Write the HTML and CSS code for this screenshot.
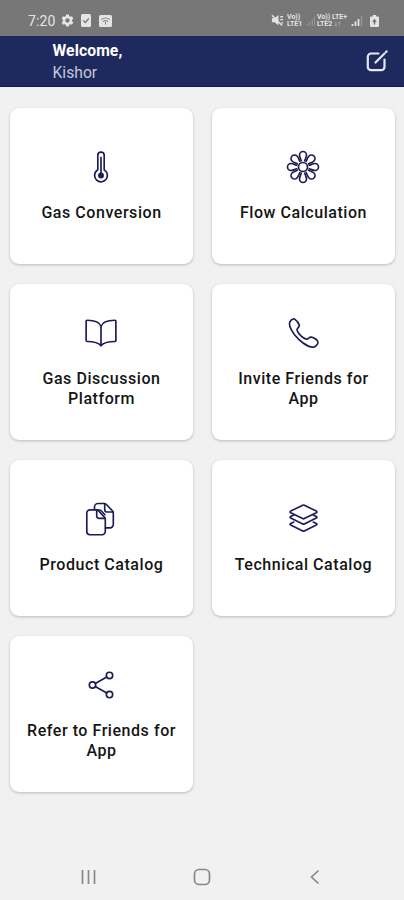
FILE: index.html
```html
<!DOCTYPE html>
<html lang="en">
<head>
<meta charset="utf-8">
<title>Home</title>
<link rel="stylesheet" href="styles.css">
</head>
<body>
<div class="status">
  <span class="time">7:20</span>
  <svg class="gear" width="13" height="13" viewBox="0 0 24 24"><path fill="currentColor" fill-rule="evenodd" d="M9.500 1h5l.7 3.200 2 1.100 3.100-1 2.500 4.300-2.400 2.200v2.400l2.400 2.200-2.500 4.300-3.100-1-2 1.100-.7 3.200h-5l-.7-3.200-2-1.100-3.100 1-2.500-4.300 2.400-2.200v-2.400L1.200 8.600l2.500-4.300 3.100 1 2-1.100zM12 8a4 4 0 100 8 4 4 0 000-8z"/></svg>
  <svg class="check" width="10" height="13" viewBox="0 0 10 13"><rect width="10" height="13" rx="1.500" fill="currentColor"/><path d="M2.300 6.500l2 2 3.500-4" fill="none" stroke="#777" stroke-width="1.300"/></svg>
  <svg class="cast" width="13" height="12" viewBox="0 0 13 12"><rect width="13" height="12" rx="1.500" fill="currentColor"/><path d="M2.300 4.500q4.200-3 8.400 0M4 6.500q2.500-1.800 5 0M6.500 7v2.500" fill="none" stroke="#8a8a8a" stroke-width="1.100"/></svg>
  <span class="spacer"></span>
  <svg class="mute" width="13" height="13" viewBox="0 0 14 13"><path fill="currentColor" d="M1 4h3l4-3.500v11L4 8.500H1z"/><path d="M1 .8l11 11M10 2.500h3M10 5.500h3M11 9h2" stroke="currentColor" stroke-width="1.500"/></svg>
  <span class="net">Vo))<br>LTE1</span>
  <svg class="dim" width="9" height="11" viewBox="0 0 10 11"><path d="M1 11V9M4 11V7M7 11V4M9.500 11V1" stroke="currentColor" stroke-width="1.300"/></svg>
  <span class="net wide">Vo)) LTE+<br>LTE2 &#8595;&#8593;</span>
  <svg class="bars" width="12" height="11" viewBox="0 0 12 11"><path d="M1.500 11V9M4.500 11V6.500M7.500 11V4" stroke="currentColor" stroke-width="1.800"/><path d="M10.500 11V.5" stroke="#999" stroke-width="1.300"/></svg>
  <svg class="battery" width="9" height="12" viewBox="0 0 9 12"><path fill="currentColor" fill-rule="evenodd" d="M2.800 0h3.400v1.500H8a1 1 0 011 1V11a1 1 0 01-1 1H1a1 1 0 01-1-1V2.500a1 1 0 011-1h1.800zM4.500 3.500L2.200 7h1.500v2.500h1.600V7h1.500z"/></svg>
</div>
<header class="header">
  <div class="greeting"><strong>Welcome,</strong><span>Kishor</span></div>
  <svg class="edit" width="24" height="24" viewBox="0 0 24 24"><path d="M13.500 4.500H6A3.200 3.200 0 002.800 7.700V18A3.200 3.200 0 006 21.200h10.300a3.200 3.200 0 003.200-3.200v-7.500"/><path d="M10.500 13.500l9-9M21 3l.6-.6"/></svg>
</header>
<main class="grid">
  <section class="card">
    <svg class="icon" viewBox="0 0 512 512"><path d="M307.720 302.270a8 8 0 01-3.720-6.750V80a48 48 0 00-48-48h0a48 48 0 00-48 48v215.520a8 8 0 01-3.710 6.740 97.510 97.510 0 00-44.190 86.070A96 96 0 00352 384a97.490 97.490 0 00-44.280-81.730zM256 112v272"/><circle class="fill" cx="256" cy="384" r="44"/></svg>
    <p>Gas Conversion</p>
  </section>
  <section class="card">
    <svg class="icon" viewBox="0 0 34 34">
      <defs><path id="petal" d="M15.300 10.800C14.600 8.800 13.500 7 13.500 5a3.500 3.500 0 017 0c0 2-1.100 3.800-1.800 5.800"/></defs>
      <g class="thin"><circle cx="17" cy="17" r="4.500"/>
      <use href="#petal"/><use href="#petal" transform="rotate(45 17 17)"/><use href="#petal" transform="rotate(90 17 17)"/><use href="#petal" transform="rotate(135 17 17)"/><use href="#petal" transform="rotate(180 17 17)"/><use href="#petal" transform="rotate(225 17 17)"/><use href="#petal" transform="rotate(270 17 17)"/><use href="#petal" transform="rotate(315 17 17)"/></g>
    </svg>
    <p>Flow Calculation</p>
  </section>
  <section class="card">
    <svg class="icon" viewBox="0 0 512 512"><path d="M256 160c16-63.160 76.430-95.410 208-96a15.940 15.940 0 0116 16v288a16 16 0 01-16 16c-128 0-177.450 25.810-208 64-30.370-38-80-64-208-64-9.880 0-16-8.050-16-17.930V80a15.940 15.940 0 0116-16c131.570.590 192 32.840 208 96zM256 160v288"/></svg>
    <p>Gas Discussion Platform</p>
  </section>
  <section class="card">
    <svg class="icon" viewBox="0 0 34 34"><path class="thin" d="M4 5.700C5.300 3.600 7.700 2.300 9 3.300c1.800 1.300 3.700 4 4.300 5.900.5 1.900-2.500 2.700-2.300 4.700.4 3.400 6.300 8.900 9.400 9.200 2 .2 2.900-2.400 4.800-2 2.300.5 5.600 2.500 6.500 4.300.9 1.700-.9 4.100-3 5.300-3.200 1.700-9.800-1.600-16-7.300C6.400 17.500 2 9.300 4 5.700z"/></svg>
    <p>Invite Friends for App</p>
  </section>
  <section class="card">
    <svg class="icon" viewBox="0 0 34 34"><g class="thin"><path d="M6 7.800h6.200c1 0 1.500.3 2.200 1l6 6.300c.7.700.9 1.200.9 2.200v12.200a3.200 3.200 0 01-3.200 3.200H6a3.200 3.200 0 01-3.200-3.200V11A3.200 3.200 0 016 7.800z"/><path d="M12.700 8.100v6a2.200 2.200 0 002.200 2.200h6"/><path d="M10.500 7.600V5A3.500 3.500 0 0114 1.500h6.200c1 0 1.500.3 2.200 1l6 6.200c.7.700.9 1.200.9 2.200v11.700a3.300 3.300 0 01-3.300 3.300h-4.500"/><path d="M20.700 1.800v6a2.200 2.200 0 002.200 2.200h6M13.500 8h1.700c1 0 1.500.3 2.200 1l3.500 3.700"/></g></svg>
    <p>Product Catalog</p>
  </section>
  <section class="card">
    <svg class="icon" viewBox="0.500 0 34 34"><g class="thin"><path d="M17.200 3.200q.8-.4 1.600 0l12 5.900q1.400.8 0 1.600l-12 5.900q-.8.400-1.600 0l-12-5.900q-1.400-.8 0-1.600z"/><path d="M8.200 13l-3 1.400q-1.400.8 0 1.600l12 5.900q.8.400 1.600 0l12-5.900q1.400-.8 0-1.600l-3-1.400"/><path d="M8.200 20.100l-3 1.400q-1.400.8 0 1.600l12 5.900q.8.400 1.600 0l12-5.900q1.400-.8 0-1.600l-3-1.400"/></g></svg>
    <p>Technical Catalog</p>
  </section>
  <section class="card">
    <svg class="icon" viewBox="0 0 512 512"><circle cx="128" cy="256" r="48"/><circle cx="384" cy="112" r="48"/><circle cx="384" cy="400" r="48"/><path d="M169.830 279.530l172.340 96.940M342.170 135.530l-172.340 96.940"/></svg>
    <p>Refer to Friends for App</p>
  </section>
</main>
<nav class="nav">
  <svg width="18" height="18" viewBox="0 0 18 18"><path d="M2.500 2v14M8.500 2v14M14.500 2v14"/></svg>
  <svg width="18" height="18" viewBox="0 0 18 18"><rect x="1.500" y="1.500" width="15" height="15" rx="4.500"/></svg>
  <svg width="18" height="18" viewBox="0 0 18 18"><path d="M12.500 2.500L5.500 9l7 6.500"/></svg>
</nav>
</body>
</html>
```
FILE: styles.css
```css
* { box-sizing: border-box; }
body {
  margin: 0;
  width: 404px;
  height: 900px;
  display: flex;
  flex-direction: column;
  background: #f1f1f1;
  font-family: Roboto, "Liberation Sans", sans-serif;
  overflow: hidden;
}
.status {
  height: 36px;
  flex: none;
  display: flex;
  align-items: center;
  padding: 5px 25px 0 28px;
  background: #777;
  color: #e4e4e4;
}
.time { width: 33px; font-size: 14px; line-height: 18px; letter-spacing: 0.1px; }
.check { margin-left: 7px; }
.cast { margin-left: 8px; }
.spacer { flex: 1; }
.net { margin-left: 3px; width: 17px; font-size: 7px; line-height: 6.500px; font-weight: 700; white-space: nowrap; }
.wide { margin-left: 2px; width: 31px; }
.dim { margin-left: 2px; color: #999; }
.bars { margin-left: 3px; }
.battery { margin-left: 7px; }
.header {
  height: 51px;
  flex: none;
  display: flex;
  justify-content: space-between;
  padding: 4px 15px 0 52.500px;
  background: #1e295e;
  border-bottom: 1px solid #111a50;
}
.greeting { display: flex; flex-direction: column; font-size: 15.700px; line-height: 22px; color: #c5c8da; }
.greeting strong { color: #fff; font-weight: 700; letter-spacing: 0.1px; }
.edit { margin-top: 9px; fill: none; stroke: #e6e8f1; stroke-width: 2.200; stroke-linecap: round; }
.grid {
  flex: 1;
  display: grid;
  grid-template-columns: 183px 183px;
  grid-auto-rows: 156px;
  column-gap: 19px;
  row-gap: 20px;
  padding: 21px 10px 0;
}
.card {
  display: flex;
  flex-direction: column;
  align-items: center;
  justify-content: center;
  gap: 19px;
  padding: 0 15px;
  border-radius: 9px;
  background: #fff;
  box-shadow: 0 1px 3px rgba(0, 0, 0, 0.24);
}
.card p {
  margin: 0;
  font-size: 16px;
  line-height: 20px;
  font-weight: 500;
  letter-spacing: 0.55px;
  text-align: center;
  color: #151515;
}
.icon {
  width: 34px;
  height: 34px;
  margin-right: 1px;
  flex: none;
  fill: none;
  stroke: #1b1b55;
  stroke-width: 25;
  stroke-linecap: round;
  stroke-linejoin: round;
}
.thin { stroke-width: 1.650; }
.fill { fill: #1b1b55; stroke: none; }
.nav {
  height: 46px;
  flex: none;
  display: flex;
  justify-content: space-between;
  padding: 14px 80px 0;
}
.nav svg { fill: none; stroke: #888; stroke-width: 1.700; }
```
